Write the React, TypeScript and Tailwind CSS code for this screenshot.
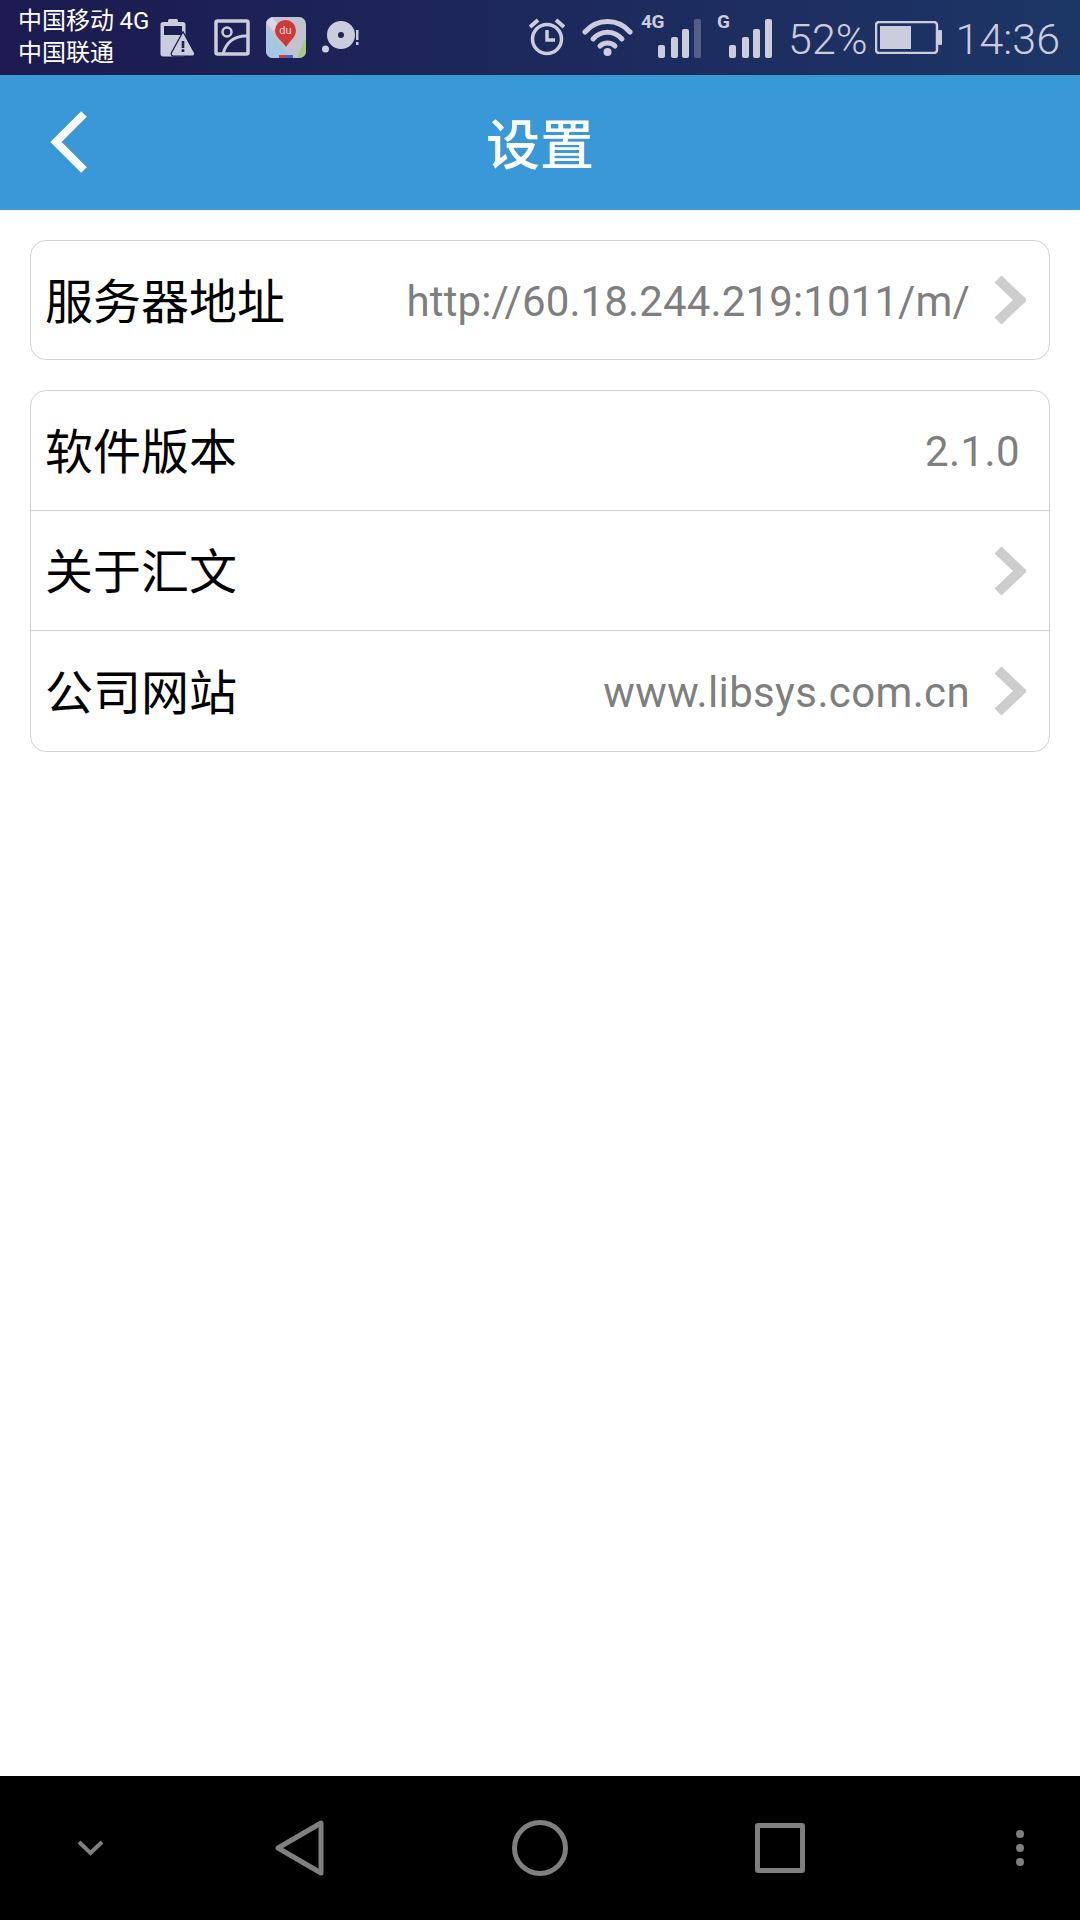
const cjk = "font-['Noto_Sans_CJK_SC',sans-serif]";

function BatteryWarn() {
  return (
    <svg width="34" height="40" viewBox="0 0 34 40" fill="none">
      <path d="M8 4.500V2.500C8 1.500 9 1 10 1h6c1 0 2 .5 2 1.500v2z" fill="#cbccdc" />
      <path fillRule="evenodd" clipRule="evenodd" d="M3 4h20c1.500 0 2.500 1 2.500 2.500V36c0 1.500-1 2.500-2.500 2.500H3c-1.500 0-2.500-1-2.500-2.500V6.500C.5 5 1.500 4 3 4zM4 8v9h18V8z" fill="#cbccdc" />
      <path fillRule="evenodd" clipRule="evenodd" d="M23 15 34 35c.5 1.500-.5 2.500-1.500 2.500H13.500c-1 0-2-1-1.500-2.500zM21.700 23v7h2.600v-7zM21.700 31.300v2.800h2.600v-2.800z" fill="#cbccdc" stroke="#1c1a50" strokeWidth="2.500" paintOrder="stroke" />
    </svg>
  );
}

function PictureIcon() {
  return (
    <svg width="36" height="37" viewBox="0 0 36 37" fill="none" stroke="#cbccdc">
      <rect x="2" y="2" width="32" height="33" rx="1.500" strokeWidth="3.500" />
      <circle cx="13" cy="13" r="4.500" strokeWidth="2.500" />
      <path d="M9 35C12 23 21 16 34 17" strokeWidth="3" />
    </svg>
  );
}

function BaiduMapIcon() {
  return (
    <svg width="40" height="41" viewBox="0 0 40 41">
      <rect width="40" height="41" rx="7" fill="#c1c3d1" />
      <path d="M0 11 L22 36 L10 41 H7C3 41 0 38 0 34z" fill="#a5c8e2" />
      <path d="M0 5 L6 0 L13 9 L7 14z" fill="#d8d9e4" />
      <path d="M38 24 L40 22 V34C40 38 37 41 33 41H31z" fill="#a9c983" />
      <rect x="13" y="38" width="7" height="3" fill="#c6403e" />
      <rect x="20" y="38" width="7" height="3" fill="#3f66c4" />
      <path d="M20 30 C16 24 9 20 9 13.500 A10.500 10.500 0 0 1 30 13.500 C30 20 24 24 20 30z" fill="#cf3a38" />
      <text x="19.500" y="17" textAnchor="middle" fontSize="11" fill="#f3d5d5" fontFamily="Roboto, sans-serif">du</text>
    </svg>
  );
}

function DiscIcon() {
  return (
    <svg width="37" height="33" viewBox="0 0 37 33">
      <path fillRule="evenodd" clipRule="evenodd" d="M19 0a14 14 0 1 1 0 28a14 14 0 1 1 0-28zM19 11a3 3 0 1 0 0 6a3 3 0 1 0 0-6z" fill="#cbccdc" />
      <circle cx="3.500" cy="28" r="3.500" fill="#cbccdc" />
      <rect x="34" y="9" width="2.500" height="10" fill="#cbccdc" />
      <rect x="34" y="21" width="2.500" height="3" fill="#cbccdc" />
    </svg>
  );
}

function AlarmIcon() {
  return (
    <svg width="36" height="38" viewBox="0 0 36 38" fill="none" stroke="#cbccdc">
      <circle cx="18" cy="21" r="14.500" strokeWidth="3.500" />
      <path d="M18 12v10h8" strokeWidth="3.500" />
      <path d="M1 9 9 2M35 9 27 2" strokeWidth="4" />
    </svg>
  );
}

function WifiIcon() {
  return (
    <svg width="51" height="38" viewBox="0 0 51 38" fill="none" stroke="#cbccdc" strokeWidth="5" strokeLinecap="round">
      <path d="M3 14C15 0 36 0 48 14" />
      <path d="M11 21C19 12 32 12 40 21" />
      <path d="M18 28C22 24 29 24 33 28" />
      <circle cx="25.500" cy="34" r="4" fill="#cbccdc" stroke="none" />
    </svg>
  );
}

function Signal({ label, dim, labelX }: { label: string; dim?: boolean; labelX: number }) {
  return (
    <svg width="61" height="47" viewBox="-3 -3 61 47">
      <text x={labelX} y="14" fontSize="19" fontWeight="700" fill="#cbccdc" fontFamily="Roboto, sans-serif" letterSpacing="-0.500">{label}</text>
      <rect x="15" y="31" width="7" height="13" rx="2" fill="#cbccdc" />
      <rect x="28" y="23" width="7" height="21" rx="2" fill="#cbccdc" />
      <rect x="39" y="15" width="7" height="29" rx="2" fill="#cbccdc" />
      <rect x="51" y="5" width="7" height="39" rx="2" fill={dim ? "#545f88" : "#cbccdc"} />
    </svg>
  );
}

function BatteryIcon() {
  return (
    <svg width="67" height="33" viewBox="0 0 67 33">
      <rect x="1" y="1" width="61" height="31" rx="3" fill="none" stroke="#cbccdc" strokeWidth="2.500" />
      <rect x="5" y="5" width="31" height="23" fill="#cbccdc" />
      <rect x="63" y="9" width="4" height="15" rx="1" fill="#cbccdc" />
    </svg>
  );
}

function Chevron() {
  return (
    <svg width="32" height="50" viewBox="0 0 32 50" fill="none" className="shrink-0">
      <path d="M4 4 26 25 4 46" stroke="#cdcdcd" strokeWidth="10" />
    </svg>
  );
}

function Row({ label, value, valueClass, arrow, last, short }: { label: string; value?: string; valueClass?: string; arrow?: boolean; last?: boolean; short?: boolean }) {
  return (
    <div className={`flex items-center pl-[14px] pr-[23px] ${short ? "h-[118px]" : "h-[120px]"} ${last ? "" : "border-b border-[#d2d2d2]"}`}>
      <span className={`${cjk} mb-[5px] text-[48px] leading-none text-black`}>{label}</span>
      <span className={`ml-auto mt-[3px] font-['Roboto',sans-serif] text-[42px] leading-none text-[#7f7f7f] ${valueClass ?? ""}`}>{value}</span>
      {arrow ? <div className="ml-[24px]"><Chevron /></div> : <div className="w-[6px]" />}
    </div>
  );
}

export default function App() {
  return (
    <div className="flex h-[1920px] w-[1080px] flex-col overflow-hidden bg-white">
      <div className="flex h-[75px] shrink-0 items-center bg-gradient-to-r from-[#1c1a50] to-[#1c3666] pl-[18px] pr-[20px]">
        <div className={`${cjk} mb-[5px] w-[142px] text-[24px] text-white`}>
          <div className="h-[32px] whitespace-nowrap leading-[32px]">中国移动 <span className="font-['Roboto',sans-serif]">4G</span></div>
          <div className="h-[32px] leading-[32px]">中国联通</div>
        </div>
        <div className="flex items-center">
          <BatteryWarn />
          <div className="ml-[20px]"><PictureIcon /></div>
          <div className="ml-[16px]"><BaiduMapIcon /></div>
          <div className="ml-[16px]"><DiscIcon /></div>
        </div>
        <div className="ml-auto flex items-center">
          <div className="mb-[2px]"><AlarmIcon /></div>
          <div className="ml-[17px] mb-[2px]"><WifiIcon /></div>
          <div className="ml-[7px] mb-[6px]"><Signal label="4G" dim labelX={-2} /></div>
          <div className="ml-[10px] mb-[6px]"><Signal label="G" labelX={3} /></div>
          <span className="ml-[16px] mt-[3px] font-['Roboto',sans-serif] text-[43px] font-light leading-none text-[#cbccdc]">52%</span>
          <div className="ml-[7px]"><BatteryIcon /></div>
          <span className="ml-[14px] mt-[3px] font-['Roboto',sans-serif] text-[43px] font-light leading-none text-[#cbccdc]">14:36</span>
        </div>
      </div>

      <div className="relative flex h-[135px] shrink-0 items-center justify-center bg-[#3898d8]">
        <svg width="40" height="64" viewBox="0 0 40 64" fill="none" className="absolute left-[49px] top-[35px]">
          <path d="M35 4 7 32 35 60" stroke="#fff" strokeWidth="8" />
        </svg>
        <span className={`${cjk} mb-[2px] text-[54px] font-medium leading-none text-white`}>设置</span>
      </div>

      <div className="flex flex-1 flex-col gap-[30px] px-[30px] pt-[30px]">
        <div className="overflow-hidden rounded-[16px] border border-[#d2d2d2]">
          <Row label="服务器地址" value="http://60.18.244.219:1011/m/" valueClass="tracking-[0.13px]" arrow last short />
        </div>
        <div className="overflow-hidden rounded-[16px] border border-[#d2d2d2]">
          <Row label="软件版本" value="2.1.0" valueClass="tracking-[0.4px]" />
          <Row label="关于汇文" arrow />
          <Row label="公司网站" value="www.libsys.com.cn" valueClass="tracking-[0.36px]" arrow last />
        </div>
      </div>

      <div className="flex h-[144px] shrink-0 items-center bg-black pl-[77px]">
        <svg width="27" height="16" viewBox="0 0 27 16" fill="none">
          <path d="M2 2 13.500 13 25 2" stroke="#7f7f7f" strokeWidth="4" />
        </svg>
        <svg width="50" height="56" viewBox="0 0 50 56" fill="none" className="ml-[171px]">
          <path d="M46 3V53L3 28z" stroke="#7f7f7f" strokeWidth="5" strokeLinejoin="round" />
        </svg>
        <div className="ml-[187px] h-[56px] w-[56px] rounded-full border-[5px] border-[#7f7f7f]" />
        <div className="ml-[187px] h-[50px] w-[50px] rounded-[3px] border-[5px] border-[#7f7f7f]" />
        <div className="ml-[211px] flex flex-col gap-[6px]">
          <div className="h-[8px] w-[8px] rounded-full bg-[#7f7f7f]" />
          <div className="h-[8px] w-[8px] rounded-full bg-[#7f7f7f]" />
          <div className="h-[8px] w-[8px] rounded-full bg-[#7f7f7f]" />
        </div>
      </div>
    </div>
  );
}
